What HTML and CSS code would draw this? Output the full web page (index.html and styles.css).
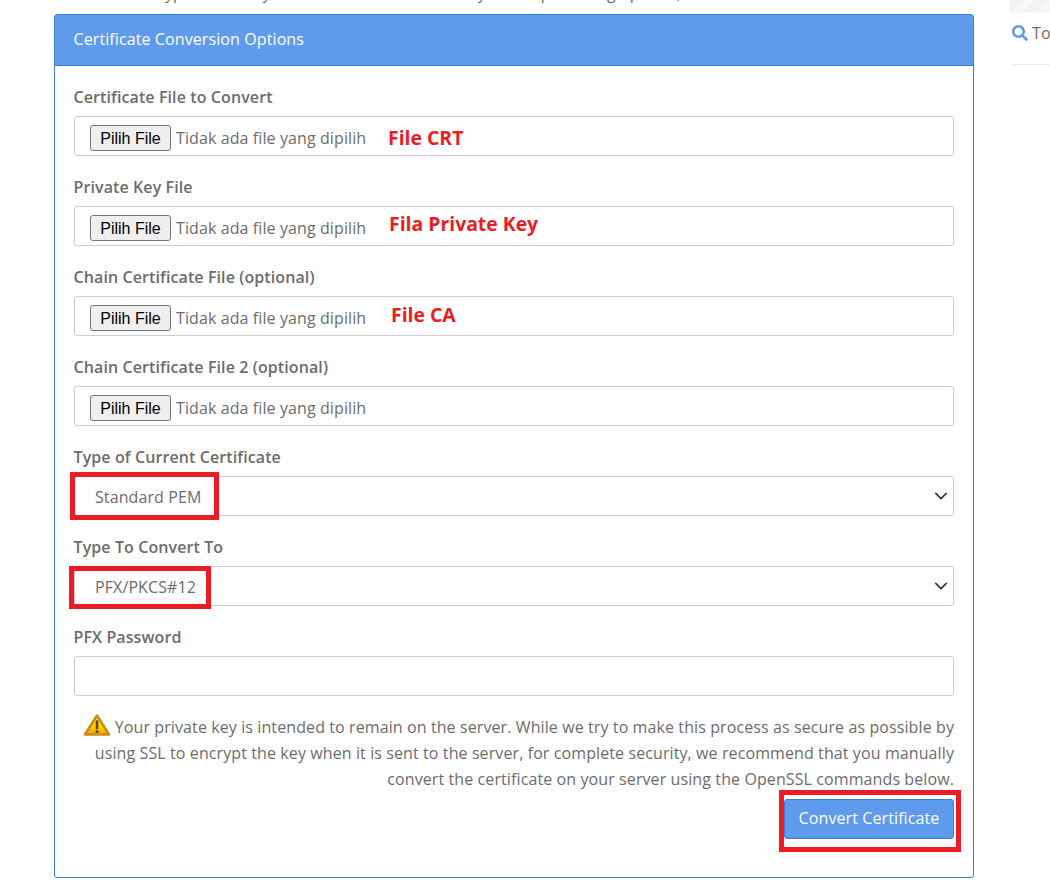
FILE: index.html
```html
<!DOCTYPE html>
<html lang="en">
<head>
    <meta charset="UTF-8">
    <meta name="viewport" content="width=device-width, initial-scale=1.0">
    <title>Certificate Conversion Options</title>
    <link rel="stylesheet" href="styles.css">
</head>
<body>
    <div class="page">
        <main class="main">
            <p class="intro">Select the file type of the key and the certificate file that you can pick using options, and</p>
            <section class="panel">
                <h2 class="panel-head">Certificate Conversion Options</h2>
                <form class="panel-body">
                    <div class="group">
                        <label>Certificate File to Convert</label>
                        <div class="control file-control">
                            <span class="file-btn">Pilih File</span>
                            <span class="file-name">Tidak ada file yang dipilih</span>
                            <span class="note note-crt">File CRT</span>
                        </div>
                    </div>
                    <div class="group">
                        <label>Private Key File</label>
                        <div class="control file-control">
                            <span class="file-btn">Pilih File</span>
                            <span class="file-name">Tidak ada file yang dipilih</span>
                            <span class="note note-key">Fila Private Key</span>
                        </div>
                    </div>
                    <div class="group">
                        <label>Chain Certificate File (optional)</label>
                        <div class="control file-control">
                            <span class="file-btn">Pilih File</span>
                            <span class="file-name">Tidak ada file yang dipilih</span>
                            <span class="note note-ca">File CA</span>
                        </div>
                    </div>
                    <div class="group">
                        <label>Chain Certificate File 2 (optional)</label>
                        <div class="control file-control">
                            <span class="file-btn">Pilih File</span>
                            <span class="file-name">Tidak ada file yang dipilih</span>
                        </div>
                    </div>
                    <div class="group">
                        <label>Type of Current Certificate</label>
                        <div class="control select-control">
                            <span>Standard PEM</span>
                            <svg class="chevron" viewBox="0 0 16 16"><path d="M2 5l6 6 6-6" fill="none" stroke="#343a40" stroke-width="2" stroke-linecap="round" stroke-linejoin="round"/></svg>
                            <span class="mark mark-pem"></span>
                        </div>
                    </div>
                    <div class="group">
                        <label>Type To Convert To</label>
                        <div class="control select-control">
                            <span>PFX/PKCS#12</span>
                            <svg class="chevron" viewBox="0 0 16 16"><path d="M2 5l6 6 6-6" fill="none" stroke="#343a40" stroke-width="2" stroke-linecap="round" stroke-linejoin="round"/></svg>
                            <span class="mark mark-pfx"></span>
                        </div>
                    </div>
                    <div class="group">
                        <label>PFX Password</label>
                        <div class="control"></div>
                    </div>
                    <p class="warning">
                        <svg class="warn-icon" viewBox="0 0 28 24">
                            <defs>
                                <linearGradient id="warnFill" x1="0" y1="0" x2="0" y2="1">
                                    <stop offset="0" stop-color="#ffe46a"/>
                                    <stop offset="0.6" stop-color="#ffd000"/>
                                    <stop offset="1" stop-color="#e8a800"/>
                                </linearGradient>
                            </defs>
                            <path d="M14 2.500L26 21.500H2z" fill="url(#warnFill)" stroke="#d08a1c" stroke-width="2.600" stroke-linejoin="round"/>
                            <path d="M14 8.500v6.500" stroke="#5a4410" stroke-width="2.600" stroke-linecap="round"/>
                            <circle cx="14" cy="18.500" r="1.500" fill="#5a4410"/>
                        </svg>
                        Your private key is intended to remain on the server. While we try to make this process as secure as possible by using SSL to encrypt the key when it is sent to the server, for complete security, we recommend that you manually convert the certificate on your server using the OpenSSL commands below.
                    </p>
                    <div class="actions">
                        <span class="submit">Convert Certificate<span class="mark mark-submit"></span></span>
                    </div>
                </form>
            </section>
        </main>
        <aside class="side">
            <div class="stripe"></div>
            <div class="side-link">
                <svg class="search" viewBox="0 0 512 512"><path fill="#5f9bec" d="M505 442.700L405.300 343c-4.500-4.500-10.600-7-17-7H372c27.600-35.300 44-79.700 44-128C416 93.100 322.900 0 208 0S0 93.100 0 208s93.100 208 208 208c48.300 0 92.700-16.400 128-44v16.300c0 6.400 2.500 12.500 7 17l99.700 99.700c9.400 9.400 24.600 9.400 33.900 0l28.300-28.300c9.400-9.400 9.400-24.600.1-34zM208 336c-70.700 0-128-57.200-128-128 0-70.700 57.200-128 128-128 70.700 0 128 57.200 128 128 0 70.700-57.200 128-128 128z"/></svg>
                <span class="side-text">Tools</span>
            </div>
        </aside>
    </div>
</body>
</html>
```

FILE: styles.css
```css
html, body {
    margin: 0;
    height: 892px;
    overflow: hidden;
    background-color: #fff;
}

body {
    font-family: "Open Sans", sans-serif;
    font-size: 16px;
    letter-spacing: 0.1px;
    color: #6c6c6c;
}

.page {
    display: flex;
    width: 1050px;
    overflow: hidden;
}

.main {
    flex: 0 0 920px;
    margin-left: 54px;
}

.intro {
    margin: -19px 0 9px;
    line-height: 24px;
    white-space: nowrap;
}

.panel {
    border: 1px solid #3b7ddd;
    border-radius: 3px;
    height: 864px;
    box-sizing: border-box;
}

.panel-head {
    margin: 0;
    padding: 0 18.5px;
    height: 51px;
    line-height: 48px;
    font-size: 16px;
    font-weight: 400;
    color: #fff;
    background-color: #5f9bec;
    border-bottom: 1px solid #3b7ddd;
    box-sizing: border-box;
}

.panel-body {
    padding: 19px 19px 0;
}

.group {
    margin-bottom: 19px;
}

.group label {
    display: block;
    margin-left: -0.5px;
    font-weight: 600;
    line-height: 24px;
    margin-bottom: 7px;
}

.control {
    position: relative;
    display: flex;
    align-items: center;
    height: 40px;
    box-sizing: border-box;
    border: 1px solid #ccc;
    border-radius: 3px;
    background-color: #fff;
}

.file-control {
    padding: 4px 0 0 15px;
}

.file-btn {
    box-sizing: border-box;
    width: 81px;
    height: 26px;
    line-height: 26px;
    text-align: center;
    font-family: "Liberation Sans", Arial, sans-serif;
    font-size: 16px;
    letter-spacing: 0;
    color: #000;
    background-color: #efefef;
    border: 1px solid #767676;
    border-radius: 3px;
}

.file-name {
    margin-left: 5px;
}

.select-control {
    padding: 1px 0 0 20px;
}

.chevron {
    position: absolute;
    right: 5px;
    top: 12px;
    width: 14px;
    height: 14px;
}

.note {
    position: absolute;
    font-size: 19.4px;
    font-weight: 700;
    letter-spacing: 0;
    line-height: 28px;
    color: #ed1c24;
    white-space: nowrap;
}

.note-crt {
    left: 313px;
    top: 7px;
}

.note-key {
    left: 314px;
    top: 3px;
}

.note-ca {
    left: 316px;
    top: 4px;
}

.mark {
    position: absolute;
    box-sizing: border-box;
    border: 5px solid #ed1c24;
}

.mark-pem {
    left: -5px;
    top: -5px;
    width: 149px;
    height: 48px;
}

.mark-pfx {
    left: -6px;
    top: -1px;
    width: 142px;
    height: 43px;
}

.warning {
    margin: -2px 0 0;
    line-height: 26px;
    text-align: right;
}

.warn-icon {
    width: 28px;
    height: 24px;
    vertical-align: -4px;
}

.actions {
    display: flex;
    justify-content: flex-end;
    margin-top: 7px;
}

.submit {
    position: relative;
    box-sizing: border-box;
    width: 170px;
    height: 40px;
    line-height: 36px;
    text-align: center;
    color: #fff;
    background-color: #5f9bec;
    border: 1px solid #3b7ddd;
    border-radius: 3px;
}

.mark-submit {
    left: -6px;
    top: -10px;
    width: 182px;
    height: 62px;
}

.side {
    flex: 0 0 38px;
    margin-left: 38px;
}

.stripe {
    height: 11px;
    margin-left: -2px;
    background: repeating-linear-gradient(135deg, #f1f2f4 0 9px, #f8f8f9 9px 18px);
    box-shadow: 0 1px 2px rgba(0,0,0,0.08);
}

.side-link {
    display: flex;
    align-items: center;
    gap: 4px;
    height: 54px;
    padding-bottom: 10px;
    box-sizing: border-box;
    border-bottom: 1px solid #eee;
    overflow: hidden;
}

.search {
    flex: none;
    width: 16px;
    height: 16px;
}

.side-text {
    white-space: nowrap;
}
```
